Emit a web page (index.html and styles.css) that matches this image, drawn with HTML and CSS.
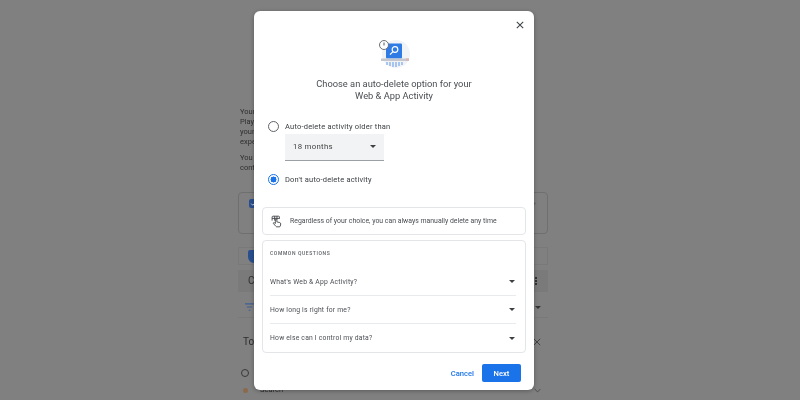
FILE: index.html
```html
<!DOCTYPE html>
<html lang="en">
<head>
<meta charset="utf-8">
<title>Web &amp; App Activity</title>
<link rel="stylesheet" href="styles.css">
</head>
<body>
<main class="page">
  <p class="para">Your Web &amp; App Activity<br>Play and other services<br>your account to give<br>experiences</p>
  <p class="para">You can change these<br>controls at any time</p>
  <section class="bg-card">
    <span class="bg-check"><svg viewBox="0 0 12 12"><path d="M3 6.2l2.1 2.1L9.2 4" fill="none" stroke="#c9d3e4" stroke-width="1.3"/></svg></span>
    <svg class="bg-chevron" viewBox="0 0 6 10"><path d="M1 1l4 4-4 4" fill="none" stroke="#3c3c3c" stroke-width="1"/></svg>
  </section>
  <section class="bg-shield-row"><span class="bg-shield"></span></section>
  <section class="bg-search">
    <span class="bg-search-c">C</span>
    <span class="bg-dots"><i></i><i></i><i></i></span>
  </section>
  <section class="bg-filter">
    <svg class="bg-filter-icon" viewBox="0 0 12 10"><path d="M1 1h10M3 4.5h6M5 8h2" stroke="#3f5f96" stroke-width="1.2" fill="none"/></svg>
    <span class="bg-caret"></span>
  </section>
  <section class="bg-today">
    <span>Today</span>
    <svg class="bg-x" viewBox="0 0 10 10"><path d="M1 1l8 8M9 1l-8 8" stroke="#333" stroke-width="1" fill="none"/></svg>
  </section>
  <section class="bg-clock"><span class="bg-clock-icon"></span></section>
  <section class="bg-item">
    <span class="bg-g"></span>
    <span class="bg-item-text">Search</span>
    <svg class="bg-down" viewBox="0 0 10 6"><path d="M1 1l4 4 4-4" stroke="#333" stroke-width="1" fill="none"/></svg>
  </section>
</main>

<div class="dialog" role="dialog">
  <div class="dialog-top">
    <svg class="close" viewBox="0 0 10 10"><path d="M1 1l8 8M9 1l-8 8" stroke="#3c4043" stroke-width="1.3" fill="none"/></svg>
  </div>
  <svg class="art" viewBox="0 0 36 30">
    <circle cx="19" cy="15" r="14" fill="#f1f3f7"/>
    <rect x="9" y="4.5" width="16" height="15" rx="1" fill="#2f7be6"/>
    <circle cx="18" cy="10.5" r="2.8" fill="none" stroke="#fff" stroke-width="1.2"/>
    <path d="M16 12.6l-3 3" stroke="#fff" stroke-width="1.3"/>
    <rect x="4" y="19.5" width="28" height="2.5" fill="#c4c8ce"/>
    <rect x="29" y="19.5" width="3" height="2" fill="#e0b0b0"/>
    <path d="M10 23v3M13 23v4M16 23v5M19 23v5M22 23v4M25 23v3" stroke="#6b9fe8" stroke-width="1.1"/>
    <circle cx="7" cy="6" r="4.5" fill="#fff" stroke="#6d7176" stroke-width="1"/>
    <path d="M7 3.5V6.5" stroke="#55595e" stroke-width="1"/>
  </svg>
  <h1 class="title">Choose an auto-delete option for your<br>Web &amp; App Activity</h1>
  <div class="options">
    <div class="option">
      <span class="radio"></span>
      <span class="option-label">Auto-delete activity older than</span>
    </div>
    <div class="select">
      <span>18 months</span>
      <span class="select-caret"></span>
    </div>
    <div class="option option-on">
      <span class="radio radio-on"></span>
      <span class="option-label">Don't auto-delete activity</span>
    </div>
  </div>
  <div class="note">
    <svg class="hand" viewBox="0 0 12 14"><path d="M1.2 6V2.2a1 1 0 0 1 1-1h6a1 1 0 0 1 1 1V4M4 1.2V6M6.5 1.2V5M1.2 3.6h8M4.8 6.8V5a.8.8 0 0 1 1.6 0v2.4l3.2.8c.7.2 1.1.8 1 1.5l-.4 2.2c-.1.5-.6.9-1.1.9H6.4c-.4 0-.8-.2-1-.5L2.6 9.2c-.3-.4 0-1 .5-1 .3 0 1 .4 1.7.9z" fill="none" stroke="#3c4043" stroke-width=".95"/></svg>
    <span>Regardless of your choice, you can always manually delete any time</span>
  </div>
  <div class="faq">
    <div class="faq-head">COMMON QUESTIONS</div>
    <div class="faq-row"><span>What's Web &amp; App Activity?</span><span class="faq-caret"></span></div>
    <div class="faq-row"><span>How long is right for me?</span><span class="faq-caret"></span></div>
    <div class="faq-row"><span>How else can I control my data?</span><span class="faq-caret"></span></div>
  </div>
  <div class="actions">
    <span class="cancel">Cancel</span>
    <span class="next">Next</span>
  </div>
</div>
</body>
</html>
```
FILE: styles.css
```css
* { box-sizing: border-box; }
html, body { margin: 0; height: 400px; overflow: hidden; }
body { background: #808080; font-family: Roboto, "Liberation Sans", sans-serif; position: relative; }

.page { width: 310px; margin-left: 238px; padding-top: 107px; color: #2e2e2e; font-size: 7.5px; line-height: 10px; filter: blur(.4px); }
.para { margin: 0 0 6px 2px; white-space: nowrap; }
.bg-card { height: 42px; margin-top: 19px; border: 1px solid #6f6f6f; border-radius: 4px; display: flex; align-items: center; justify-content: space-between; padding: 0 11px 20px 9px; }
.bg-check { width: 9px; height: 9px; margin-left: 1px; border-radius: 2px; background: #2a4f8f; display: block; }
.bg-check svg { display: block; width: 9px; height: 9px; }
.bg-chevron { width: 5px; height: 7px; }
.bg-shield-row { height: 18px; margin-top: 13px; border: 1px solid #797979; display: flex; align-items: center; padding-left: 9px; }
.bg-shield { width: 12px; height: 13px; border-radius: 2px 2px 6px 6px; background: #2a4f8f; }
.bg-search { height: 22px; background: #7a7a7a; margin-top: 5px; display: flex; align-items: center; justify-content: space-between; padding: 0 11px 0 10px; font-size: 10px; }
.bg-dots { display: flex; flex-direction: column; gap: 1px; }
.bg-dots i { width: 2px; height: 2px; background: #333; display: block; }
.bg-filter { height: 20px; margin-top: 6px; display: flex; align-items: center; justify-content: space-between; padding: 0 7px 0 6px; border-bottom: 1px solid #797979; }
.bg-filter-icon { width: 11px; height: 9px; }
.bg-caret { border: 3px solid transparent; border-top-color: #333; border-bottom: 0; }
.bg-today { height: 34px; margin-top: 7px; display: flex; align-items: center; justify-content: space-between; padding: 0 7px 0 5px; font-size: 10px; color: #2c2c2c; }
.bg-x { width: 8px; height: 8px; }
.bg-clock { height: 16px; margin-top: 6px; padding-left: 3px; display: flex; align-items: center; }
.bg-clock-icon { width: 8px; height: 8px; border: 1px solid #383838; border-radius: 50%; }
.bg-item { display: flex; align-items: center; gap: 12px; padding-left: 5px; height: 14px; margin-top: 2px; }
.bg-g { width: 5px; height: 5px; border-radius: 50%; background: #8a6a4a; }
.bg-item-text { flex: 1; }
.bg-down { width: 7px; height: 5px; margin-right: 7px; }

.dialog { position: absolute; left: 254px; top: 11px; width: 280px; height: 379px; background: #fff; border-radius: 6px; box-shadow: 0 1px 4px rgba(0,0,0,.3); display: flex; flex-direction: column; color: #3c4043; filter: blur(.3px); }
.dialog-top { display: flex; justify-content: flex-end; padding: 10px 10px 0 0; height: 28px; flex: none; }
.close { width: 8px; height: 8px; }
.art { width: 36px; height: 30px; display: block; margin-left: 123px; flex: none; }
.title { margin: 9px 0 0; font-size: 9.3px; line-height: 12px; font-weight: 400; text-align: center; color: #4a4e52; }
.options { padding: 16px 0 0 14px; }
.option { display: flex; align-items: center; gap: 6px; height: 16px; font-size: 7.5px; letter-spacing: .2px; color: #3c4043; }
.radio { width: 11px; height: 11px; border: 1.3px solid #5f6368; border-radius: 50%; flex: none; }
.radio-on { border-color: #1a73e8; background: radial-gradient(circle, #1a73e8 0 2.8px, #fff 3.2px); }
.select { width: 99px; height: 27px; margin-left: 17px; background: #f1f3f4; border-bottom: 1px solid #9aa0a6; display: flex; align-items: center; justify-content: space-between; padding: 0 8px 1px 8px; font-size: 7.8px; letter-spacing: .3px; color: #444; }
.select-caret { border: 3px solid transparent; border-top-color: #3c4043; border-bottom: 0; }
.option-on { margin-top: 10px; }
.note { margin: 20px 8px 0; height: 28px; flex: none; border: 1px solid #e3e5e8; border-radius: 4px; display: flex; align-items: center; gap: 8px; padding-left: 8px; font-size: 6.9px; color: #4b4f54; white-space: nowrap; }
.hand { width: 11px; height: 13px; flex: none; }
.faq { margin: 5px 8px 0; border: 1px solid #e3e5e8; border-radius: 4px; padding: 0 9px 0 7px; }
.faq-head { font-size: 5px; font-weight: 500; letter-spacing: .6px; color: #5f6368; height: 27px; padding-top: 8.5px; line-height: 7px; }
.faq-row { height: 28px; display: flex; align-items: center; justify-content: space-between; padding-right: 1px; font-size: 6.8px; letter-spacing: .2px; color: #4b4f54; border-bottom: 1px solid #e8eaed; }
.faq-row:last-child { border-bottom: 0; }
.faq-caret { border: 3px solid transparent; border-top: 3.5px solid #3c4043; border-bottom: 0; }
.actions { display: flex; justify-content: flex-end; align-items: center; gap: 8px; padding: 11px 13px 0 0; font-size: 7.6px; font-weight: 500; }
.cancel { color: #1a73e8; }
.next { width: 39px; height: 18px; border-radius: 2px; background: #1a73e8; color: #fff; display: flex; align-items: center; justify-content: center; }
```
